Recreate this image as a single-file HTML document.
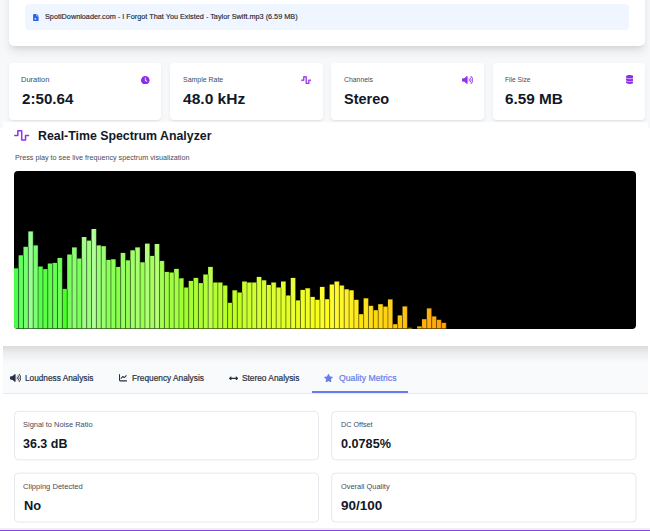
<!DOCTYPE html>
<html><head><meta charset="utf-8"><title>Audio Analyzer</title>
<style>
html,body{margin:0;padding:0}
body{width:650px;height:531px;overflow:hidden;position:relative;background:linear-gradient(to bottom,#f7f8fa 0,#f7f8fa 127.5px,#fff 128px);font-family:"Liberation Sans",sans-serif;color:#1f2937}
.abs,.t,.ic{position:absolute}
.t{white-space:nowrap;line-height:1;display:block;z-index:6;transform-origin:0 50%}
.ic{z-index:6}
.topcard{left:9px;top:-20px;width:636px;height:66.3px;background:#fff;border-radius:5px;box-shadow:0 6.5px 10px -1.5px rgba(0,0,0,.10),0 2.5px 4px -2px rgba(0,0,0,.08)}
.pill{left:25.4px;top:3.8px;width:603.4px;height:26.2px;background:#eff6ff;border-radius:4px}
.stat{top:63px;width:152.4px;height:56.7px;background:#fff;border-radius:4px;box-shadow:0 2px 4px -1px rgba(0,0,0,.10),0 1px 2px -1px rgba(0,0,0,.06)}
.panel{left:2.5px;top:121.5px;width:645.5px;height:224px;background:#fff;z-index:3}
.tabs{left:2.5px;top:345.5px;width:645.5px;height:47px;background:#f9fafb;border-bottom:1px solid #e7e9ed;z-index:2}
.tabs:before{content:"";position:absolute;left:0;top:0;right:0;height:18px;background:linear-gradient(to bottom,rgba(0,0,0,.125),rgba(0,0,0,.05) 40%,rgba(0,0,0,.015) 75%,rgba(0,0,0,0))}
.content{left:2.5px;top:393.5px;width:645.5px;height:140px;background:#fff}
.mcard{width:302.6px;height:47.6px;border:1px solid #eaecf0;border-radius:4px;background:#fff}
.bottom{left:0;top:529.5px;width:650px;height:2px;background:#8b3ff0;z-index:7}
</style></head><body>
<div class="abs topcard"></div>
<div class="abs pill"></div>
<svg class="ic" style="left:33.4px;top:13.6px" width="5.7" height="7.3" viewBox="0 0 384 512"><path fill="#2563eb" d="M64 0C28.700 0 0 28.700 0 64V448c0 35.300 28.700 64 64 64H320c35.300 0 64-28.700 64-64V160H256c-17.700 0-32-14.300-32-32V0H64zM256 0V128H384L256 0z"/><path fill="#dbeafe" d="M96 304h44l56-48v176l-56-48H96zM232 296c32 20 32 76 0 96z"/></svg>
<span class="t" id="fname" style="-webkit-text-stroke:0.15px;left:44.80px;top:13.25px;font-size:7.5px;font-weight:400;color:#1f2937;transform:scaleX(0.9705)">SpotiDownloader.com - I Forgot That You Existed - Taylor Swift.mp3 (6.59 MB)</span>

<div class="abs stat" style="left:9.0px"></div><div class="abs stat" style="left:170.2px"></div><div class="abs stat" style="left:331.4px"></div><div class="abs stat" style="left:492.6px"></div>
<span class="t" id="l1" style="left:21.30px;top:76.41px;font-size:7.9px;font-weight:400;color:#434c5a;transform:scaleX(0.9488)">Duration</span><span class="t" id="s1" style="left:22.00px;top:91.35px;font-size:15.3px;font-weight:700;color:#111827;transform:scaleX(0.9905)">2:50.64</span><svg class="ic" style="left:141.3px;top:75.7px" width="8.6" height="8.6" viewBox="0 0 512 512"><path fill="#8b2eea" d="M256 0a256 256 0 1 1 0 512A256 256 0 1 1 256 0zM232 120V256c0 8 4 15.500 10.700 20l96 64c11 7.400 25.900 4.400 33.300-6.700s4.400-25.900-6.700-33.300L280 243.200V120c0-13.300-10.700-24-24-24s-24 10.700-24 24z"/></svg>
<span class="t" id="l2" style="left:182.70px;top:76.41px;font-size:7.9px;font-weight:400;color:#434c5a;transform:scaleX(0.8811)">Sample Rate</span><span class="t" id="s2" style="left:182.70px;top:91.35px;font-size:15.3px;font-weight:700;color:#111827;transform:scaleX(1.0174)">48.0 kHz</span><svg class="ic" style="left:300.6px;top:76.1px" width="10.5" height="8.4" viewBox="-10 17 660 478" preserveAspectRatio="none"><path fill="#9333ea" stroke="#9333ea" stroke-width="18" d="M128 64c0-17.700 14.300-32 32-32H320c17.700 0 32 14.300 32 32V416h96V256c0-17.700 14.300-32 32-32H608c17.700 0 32 14.300 32 32s-14.300 32-32 32H512V448c0 17.700-14.300 32-32 32H320c-17.700 0-32-14.300-32-32V96H192V256c0 17.700-14.300 32-32 32H32c-17.700 0-32-14.300-32-32s14.300-32 32-32h96V64z"/></svg>
<span class="t" id="l3" style="left:343.50px;top:76.41px;font-size:7.9px;font-weight:400;color:#434c5a;transform:scaleX(0.8697)">Channels</span><span class="t" id="s3" style="left:344.00px;top:91.35px;font-size:15.3px;font-weight:700;color:#111827;transform:scaleX(0.9452)">Stereo</span><svg class="ic" style="left:461.7px;top:75.8px" width="11.2" height="8.0" viewBox="0 28 640 456"><g fill="#9333ea"><path d="M301.1 34.8C312.6 40 320 51.400 320 64V448c0 12.600-7.400 24-18.900 29.200s-25 3.100-34.400-5.300L131.800 352H64c-35.300 0-64-28.700-64-64V224c0-35.300 28.700-64 64-64h67.800L266.700 40.100c9.400-8.400 22.900-10.400 34.400-5.300z"/><g><path d="M412.6 181.500C434.100 199.100 448 225.900 448 256s-13.900 56.900-35.400 74.500c-10.300 8.400-25.400 6.800-33.800-3.500s-6.800-25.400 3.500-33.800C393.100 284.400 400 271 400 256s-6.900-28.400-17.700-37.300c-10.300-8.400-11.800-23.500-3.500-33.800s23.500-11.800 33.800-3.500z"/><path d="M473.1 107c43.200 35.200 70.900 88.900 70.900 149s-27.700 113.800-70.900 149c-10.300 8.400-25.400 6.800-33.800-3.500s-6.800-25.400 3.500-33.800C475.300 341.300 496 301.100 496 256s-20.700-85.300-53.200-111.800c-10.300-8.400-11.800-23.500-3.500-33.800s23.500-11.800 33.800-3.500z"/><path d="M533.6 32.500C598.500 85.200 640 165.800 640 256s-41.500 170.700-106.400 223.500c-10.300 8.400-25.400 6.800-33.800-3.500s-6.800-25.400 3.500-33.800C557.500 398.200 592 331.200 592 256s-34.500-142.200-88.700-186.300c-10.300-8.400-11.800-23.500-3.500-33.800s23.500-11.800 33.800-3.500z"/></g></g></svg>
<span class="t" id="l4" style="left:504.80px;top:76.41px;font-size:7.9px;font-weight:400;color:#434c5a;transform:scaleX(0.8392)">File Size</span><span class="t" id="s4" style="left:505.30px;top:91.35px;font-size:15.3px;font-weight:700;color:#111827;transform:scaleX(1.0015)">6.59 MB</span><svg class="ic" style="left:625.7px;top:75.3px" width="7.8" height="8.9" viewBox="0 0 448 512"><path fill="#8b2eea" d="M448 80v48c0 44.200-100.300 80-224 80S0 172.200 0 128V80C0 35.800 100.300 0 224 0S448 35.800 448 80zM393.200 214.700c20.800-7.400 39.900-16.900 54.800-28.600V288c0 44.200-100.300 80-224 80S0 332.200 0 288V186.100c14.900 11.800 34 21.200 54.800 28.600C99.700 230.700 159.500 240 224 240s124.300-9.300 169.200-25.300zM0 346.100c14.900 11.800 34 21.200 54.800 28.600C99.700 390.700 159.500 400 224 400s124.300-9.300 169.200-25.300c20.800-7.400 39.900-16.900 54.800-28.600V432c0 44.200-100.300 80-224 80S0 476.200 0 432V346.100z"/></svg>

<div class="abs panel"></div>
<svg class="ic" style="left:14.3px;top:130.0px" width="15.4" height="10.8" viewBox="0 32 640 448"><path fill="#9333ea" d="M128 64c0-17.700 14.300-32 32-32H320c17.700 0 32 14.300 32 32V416h96V256c0-17.700 14.300-32 32-32H608c17.700 0 32 14.300 32 32s-14.300 32-32 32H512V448c0 17.700-14.300 32-32 32H320c-17.700 0-32-14.300-32-32V96H192V256c0 17.700-14.300 32-32 32H32c-17.700 0-32-14.300-32-32s14.300-32 32-32h96V64z"/></svg>
<span class="t" id="title" style="left:38.20px;top:129.84px;font-size:12px;font-weight:700;color:#111827;transform:scaleX(1.0282)">Real-Time Spectrum Analyzer</span>
<span class="t" id="sub" style="left:14.50px;top:154.07px;font-size:7.6px;font-weight:400;color:#434c5a;transform:scaleX(0.9477)">Press play to see live frequency spectrum visualization</span>
<svg class="abs" style="left:14.3px;top:171px;border-radius:4px;background:#000;z-index:6" width="622" height="157.5" viewBox="0 0 622 157.5">
<rect x="-0.25" y="97.3" width="4.88" height="60.2" fill="hsl(120.0,100%,64.1%)"/>
<rect x="4.61" y="84.3" width="4.88" height="73.2" fill="hsl(119.1,100%,68.8%)"/>
<rect x="9.47" y="75.8" width="4.88" height="81.7" fill="hsl(118.1,100%,72.2%)"/>
<rect x="14.33" y="60.4" width="4.88" height="97.1" fill="hsl(117.2,100%,79.0%)"/>
<rect x="19.19" y="74.4" width="4.88" height="83.1" fill="hsl(116.2,100%,72.7%)"/>
<rect x="24.05" y="95.5" width="4.88" height="62.0" fill="hsl(115.3,100%,64.7%)"/>
<rect x="28.91" y="98.1" width="4.88" height="59.4" fill="hsl(114.4,100%,63.8%)"/>
<rect x="33.77" y="92.5" width="4.88" height="65.0" fill="hsl(113.4,100%,65.7%)"/>
<rect x="38.62" y="91.9" width="4.88" height="65.6" fill="hsl(112.5,100%,65.9%)"/>
<rect x="43.48" y="86.9" width="4.88" height="70.6" fill="hsl(111.6,100%,67.8%)"/>
<rect x="48.34" y="117.9" width="4.88" height="39.6" fill="hsl(110.6,100%,57.8%)"/>
<rect x="53.20" y="83.5" width="4.88" height="74.0" fill="hsl(109.7,100%,69.1%)"/>
<rect x="58.06" y="76.4" width="4.88" height="81.1" fill="hsl(108.8,100%,71.9%)"/>
<rect x="62.92" y="87.5" width="4.88" height="70.0" fill="hsl(107.8,100%,67.5%)"/>
<rect x="67.78" y="66.0" width="4.88" height="91.5" fill="hsl(106.9,100%,76.4%)"/>
<rect x="72.64" y="69.6" width="4.88" height="87.9" fill="hsl(105.9,100%,74.8%)"/>
<rect x="77.50" y="58.0" width="4.88" height="99.5" fill="hsl(105.0,100%,80.1%)"/>
<rect x="82.36" y="74.4" width="4.88" height="83.1" fill="hsl(104.1,100%,72.7%)"/>
<rect x="87.22" y="75.2" width="4.88" height="82.3" fill="hsl(103.1,100%,72.4%)"/>
<rect x="92.08" y="88.9" width="4.88" height="68.6" fill="hsl(102.2,100%,67.0%)"/>
<rect x="96.94" y="88.3" width="4.88" height="69.2" fill="hsl(101.2,100%,67.2%)"/>
<rect x="101.80" y="95.9" width="4.88" height="61.6" fill="hsl(100.3,100%,64.5%)"/>
<rect x="106.66" y="81.9" width="4.88" height="75.6" fill="hsl(99.4,100%,69.7%)"/>
<rect x="111.52" y="89.3" width="4.88" height="68.2" fill="hsl(98.4,100%,66.9%)"/>
<rect x="116.38" y="79.3" width="4.88" height="78.2" fill="hsl(97.5,100%,70.7%)"/>
<rect x="121.23" y="76.4" width="4.88" height="81.1" fill="hsl(96.6,100%,71.9%)"/>
<rect x="126.09" y="91.3" width="4.88" height="66.2" fill="hsl(95.6,100%,66.2%)"/>
<rect x="130.95" y="72.6" width="4.88" height="84.9" fill="hsl(94.7,100%,73.5%)"/>
<rect x="135.81" y="84.9" width="4.88" height="72.6" fill="hsl(93.8,100%,68.5%)"/>
<rect x="140.67" y="73.0" width="4.88" height="84.5" fill="hsl(92.8,100%,73.3%)"/>
<rect x="145.53" y="89.9" width="4.88" height="67.6" fill="hsl(91.9,100%,66.7%)"/>
<rect x="150.39" y="100.9" width="4.88" height="56.6" fill="hsl(90.9,100%,62.9%)"/>
<rect x="155.25" y="101.5" width="4.88" height="56.0" fill="hsl(90.0,100%,62.7%)"/>
<rect x="160.11" y="97.9" width="4.88" height="59.6" fill="hsl(89.1,100%,63.8%)"/>
<rect x="164.97" y="107.3" width="4.88" height="50.2" fill="hsl(88.1,100%,60.8%)"/>
<rect x="169.83" y="116.5" width="4.88" height="41.0" fill="hsl(87.2,100%,58.2%)"/>
<rect x="174.69" y="109.9" width="4.88" height="47.6" fill="hsl(86.2,100%,60.1%)"/>
<rect x="179.55" y="106.9" width="4.88" height="50.6" fill="hsl(85.3,100%,61.0%)"/>
<rect x="184.41" y="112.1" width="4.88" height="45.4" fill="hsl(84.4,100%,59.4%)"/>
<rect x="189.27" y="103.5" width="4.88" height="54.0" fill="hsl(83.4,100%,62.0%)"/>
<rect x="194.12" y="95.9" width="4.88" height="61.6" fill="hsl(82.5,100%,64.5%)"/>
<rect x="198.98" y="111.5" width="4.88" height="46.0" fill="hsl(81.6,100%,59.6%)"/>
<rect x="203.84" y="111.5" width="4.88" height="46.0" fill="hsl(80.6,100%,59.6%)"/>
<rect x="208.70" y="114.5" width="4.88" height="43.0" fill="hsl(79.7,100%,58.7%)"/>
<rect x="213.56" y="131.8" width="4.88" height="25.7" fill="hsl(78.8,100%,54.4%)"/>
<rect x="218.42" y="119.3" width="4.88" height="38.2" fill="hsl(77.8,100%,57.4%)"/>
<rect x="223.28" y="121.5" width="4.88" height="36.0" fill="hsl(76.9,100%,56.9%)"/>
<rect x="228.14" y="110.5" width="4.88" height="47.0" fill="hsl(75.9,100%,59.9%)"/>
<rect x="233.00" y="111.5" width="4.88" height="46.0" fill="hsl(75.0,100%,59.6%)"/>
<rect x="237.86" y="111.5" width="4.88" height="46.0" fill="hsl(74.1,100%,59.6%)"/>
<rect x="242.72" y="105.9" width="4.88" height="51.6" fill="hsl(73.1,100%,61.3%)"/>
<rect x="247.58" y="109.3" width="4.88" height="48.2" fill="hsl(72.2,100%,60.2%)"/>
<rect x="252.44" y="113.9" width="4.88" height="43.6" fill="hsl(71.2,100%,58.9%)"/>
<rect x="257.30" y="111.5" width="4.88" height="46.0" fill="hsl(70.3,100%,59.6%)"/>
<rect x="262.16" y="116.5" width="4.88" height="41.0" fill="hsl(69.4,100%,58.2%)"/>
<rect x="267.02" y="110.5" width="4.88" height="47.0" fill="hsl(68.4,100%,59.9%)"/>
<rect x="271.88" y="124.5" width="4.88" height="33.0" fill="hsl(67.5,100%,56.1%)"/>
<rect x="276.73" y="106.9" width="4.88" height="50.6" fill="hsl(66.6,100%,61.0%)"/>
<rect x="281.59" y="129.4" width="4.88" height="28.1" fill="hsl(65.6,100%,55.0%)"/>
<rect x="286.45" y="118.9" width="4.88" height="38.6" fill="hsl(64.7,100%,57.5%)"/>
<rect x="291.31" y="117.3" width="4.88" height="40.2" fill="hsl(63.8,100%,58.0%)"/>
<rect x="296.17" y="125.9" width="4.88" height="31.6" fill="hsl(62.8,100%,55.8%)"/>
<rect x="301.03" y="128.8" width="4.88" height="28.7" fill="hsl(61.9,100%,55.1%)"/>
<rect x="305.89" y="115.9" width="4.88" height="41.6" fill="hsl(60.9,100%,58.4%)"/>
<rect x="310.75" y="128.2" width="4.88" height="29.3" fill="hsl(60.0,100%,55.2%)"/>
<rect x="315.61" y="113.5" width="4.88" height="44.0" fill="hsl(59.1,100%,59.0%)"/>
<rect x="320.47" y="110.5" width="4.88" height="47.0" fill="hsl(58.1,100%,59.9%)"/>
<rect x="325.33" y="114.5" width="4.88" height="43.0" fill="hsl(57.2,100%,58.7%)"/>
<rect x="330.19" y="118.3" width="4.88" height="39.2" fill="hsl(56.2,100%,57.7%)"/>
<rect x="335.05" y="119.3" width="4.88" height="38.2" fill="hsl(55.3,100%,57.4%)"/>
<rect x="339.91" y="128.8" width="4.88" height="28.7" fill="hsl(54.4,100%,55.1%)"/>
<rect x="344.77" y="143.2" width="4.88" height="14.3" fill="hsl(53.4,100%,52.2%)"/>
<rect x="349.62" y="127.3" width="4.88" height="30.2" fill="hsl(52.5,100%,55.5%)"/>
<rect x="354.48" y="134.8" width="4.88" height="22.7" fill="hsl(51.6,100%,53.8%)"/>
<rect x="359.34" y="139.2" width="4.88" height="18.3" fill="hsl(50.6,100%,52.9%)"/>
<rect x="364.20" y="133.2" width="4.88" height="24.3" fill="hsl(49.7,100%,54.1%)"/>
<rect x="369.06" y="135.6" width="4.88" height="21.9" fill="hsl(48.8,100%,53.6%)"/>
<rect x="373.92" y="128.4" width="4.88" height="29.1" fill="hsl(47.8,100%,55.2%)"/>
<rect x="378.78" y="153.2" width="4.88" height="4.3" fill="hsl(46.9,100%,50.6%)"/>
<rect x="383.64" y="144.4" width="4.88" height="13.1" fill="hsl(45.9,100%,52.0%)"/>
<rect x="388.50" y="135.4" width="4.88" height="22.1" fill="hsl(45.0,100%,53.7%)"/>
<rect x="393.36" y="156.8" width="4.88" height="0.7" fill="hsl(44.1,100%,50.1%)"/>
<rect x="403.08" y="155.4" width="4.88" height="2.1" fill="hsl(42.2,100%,50.3%)"/>
<rect x="407.94" y="148.2" width="4.88" height="9.3" fill="hsl(41.2,100%,51.3%)"/>
<rect x="412.80" y="137.4" width="4.88" height="20.1" fill="hsl(40.3,100%,53.3%)"/>
<rect x="417.66" y="145.4" width="4.88" height="12.1" fill="hsl(39.4,100%,51.8%)"/>
<rect x="422.52" y="148.8" width="4.88" height="8.7" fill="hsl(38.4,100%,51.2%)"/>
<rect x="427.38" y="151.8" width="4.88" height="5.7" fill="hsl(37.5,100%,50.8%)"/>
<g fill="#000" fill-opacity=".38">
<rect x="4.06" y="97.3" width="1.1" height="60.2"/>
<rect x="8.92" y="84.3" width="1.1" height="73.2"/>
<rect x="13.78" y="75.8" width="1.1" height="81.7"/>
<rect x="18.64" y="60.4" width="1.1" height="97.1"/>
<rect x="23.50" y="74.4" width="1.1" height="83.1"/>
<rect x="28.36" y="95.5" width="1.1" height="62.0"/>
<rect x="33.22" y="98.1" width="1.1" height="59.4"/>
<rect x="38.08" y="92.5" width="1.1" height="65.0"/>
<rect x="42.93" y="91.9" width="1.1" height="65.6"/>
<rect x="47.79" y="86.9" width="1.1" height="70.6"/>
<rect x="52.65" y="117.9" width="1.1" height="39.6"/>
<rect x="57.51" y="83.5" width="1.1" height="74.0"/>
<rect x="62.37" y="76.4" width="1.1" height="81.1"/>
<rect x="67.23" y="87.5" width="1.1" height="70.0"/>
<rect x="72.09" y="66.0" width="1.1" height="91.5"/>
<rect x="76.95" y="69.6" width="1.1" height="87.9"/>
<rect x="81.81" y="58.0" width="1.1" height="99.5"/>
<rect x="86.67" y="74.4" width="1.1" height="83.1"/>
<rect x="91.53" y="75.2" width="1.1" height="82.3"/>
<rect x="96.39" y="88.9" width="1.1" height="68.6"/>
<rect x="101.25" y="88.3" width="1.1" height="69.2"/>
<rect x="106.11" y="95.9" width="1.1" height="61.6"/>
<rect x="110.97" y="81.9" width="1.1" height="75.6"/>
<rect x="115.83" y="89.3" width="1.1" height="68.2"/>
<rect x="120.68" y="79.3" width="1.1" height="78.2"/>
<rect x="125.54" y="76.4" width="1.1" height="81.1"/>
<rect x="130.40" y="91.3" width="1.1" height="66.2"/>
<rect x="135.26" y="72.6" width="1.1" height="84.9"/>
<rect x="140.12" y="84.9" width="1.1" height="72.6"/>
<rect x="144.98" y="73.0" width="1.1" height="84.5"/>
<rect x="149.84" y="89.9" width="1.1" height="67.6"/>
<rect x="154.70" y="100.9" width="1.1" height="56.6"/>
<rect x="159.56" y="101.5" width="1.1" height="56.0"/>
<rect x="164.42" y="97.9" width="1.1" height="59.6"/>
<rect x="169.28" y="107.3" width="1.1" height="50.2"/>
<rect x="174.14" y="116.5" width="1.1" height="41.0"/>
<rect x="179.00" y="109.9" width="1.1" height="47.6"/>
<rect x="183.86" y="106.9" width="1.1" height="50.6"/>
<rect x="188.72" y="112.1" width="1.1" height="45.4"/>
<rect x="193.57" y="103.5" width="1.1" height="54.0"/>
<rect x="198.43" y="95.9" width="1.1" height="61.6"/>
<rect x="203.29" y="111.5" width="1.1" height="46.0"/>
<rect x="208.15" y="111.5" width="1.1" height="46.0"/>
<rect x="213.01" y="114.5" width="1.1" height="43.0"/>
<rect x="217.87" y="131.8" width="1.1" height="25.7"/>
<rect x="222.73" y="119.3" width="1.1" height="38.2"/>
<rect x="227.59" y="121.5" width="1.1" height="36.0"/>
<rect x="232.45" y="110.5" width="1.1" height="47.0"/>
<rect x="237.31" y="111.5" width="1.1" height="46.0"/>
<rect x="242.17" y="111.5" width="1.1" height="46.0"/>
<rect x="247.03" y="105.9" width="1.1" height="51.6"/>
<rect x="251.89" y="109.3" width="1.1" height="48.2"/>
<rect x="256.75" y="113.9" width="1.1" height="43.6"/>
<rect x="261.61" y="111.5" width="1.1" height="46.0"/>
<rect x="266.47" y="116.5" width="1.1" height="41.0"/>
<rect x="271.32" y="110.5" width="1.1" height="47.0"/>
<rect x="276.18" y="124.5" width="1.1" height="33.0"/>
<rect x="281.04" y="106.9" width="1.1" height="50.6"/>
<rect x="285.90" y="129.4" width="1.1" height="28.1"/>
<rect x="290.76" y="118.9" width="1.1" height="38.6"/>
<rect x="295.62" y="117.3" width="1.1" height="40.2"/>
<rect x="300.48" y="125.9" width="1.1" height="31.6"/>
<rect x="305.34" y="128.8" width="1.1" height="28.7"/>
<rect x="310.20" y="115.9" width="1.1" height="41.6"/>
<rect x="315.06" y="128.2" width="1.1" height="29.3"/>
<rect x="319.92" y="113.5" width="1.1" height="44.0"/>
<rect x="324.78" y="110.5" width="1.1" height="47.0"/>
<rect x="329.64" y="114.5" width="1.1" height="43.0"/>
<rect x="334.50" y="118.3" width="1.1" height="39.2"/>
<rect x="339.36" y="119.3" width="1.1" height="38.2"/>
<rect x="344.22" y="128.8" width="1.1" height="28.7"/>
<rect x="349.07" y="143.2" width="1.1" height="14.3"/>
<rect x="353.93" y="127.3" width="1.1" height="30.2"/>
<rect x="358.79" y="134.8" width="1.1" height="22.7"/>
<rect x="363.65" y="139.2" width="1.1" height="18.3"/>
<rect x="368.51" y="133.2" width="1.1" height="24.3"/>
<rect x="373.37" y="135.6" width="1.1" height="21.9"/>
<rect x="378.23" y="128.4" width="1.1" height="29.1"/>
<rect x="383.09" y="153.2" width="1.1" height="4.3"/>
<rect x="387.95" y="144.4" width="1.1" height="13.1"/>
<rect x="392.81" y="135.4" width="1.1" height="22.1"/>
<rect x="397.67" y="156.8" width="1.1" height="0.7"/>
<rect x="407.39" y="155.4" width="1.1" height="2.1"/>
<rect x="412.25" y="148.2" width="1.1" height="9.3"/>
<rect x="417.11" y="137.4" width="1.1" height="20.1"/>
<rect x="421.97" y="145.4" width="1.1" height="12.1"/>
<rect x="426.82" y="148.8" width="1.1" height="8.7"/>
<rect x="431.68" y="151.8" width="1.1" height="5.7"/>
</g>
</svg>

<div class="abs tabs"></div>
<svg class="ic" style="left:9.7px;top:374.3px" width="11.2" height="8.0" viewBox="0 28 640 456"><g fill="#273142"><path d="M301.1 34.8C312.6 40 320 51.400 320 64V448c0 12.600-7.400 24-18.900 29.200s-25 3.100-34.400-5.300L131.800 352H64c-35.300 0-64-28.700-64-64V224c0-35.300 28.700-64 64-64h67.800L266.700 40.100c9.400-8.400 22.900-10.400 34.400-5.300z"/><g><path d="M412.6 181.500C434.100 199.100 448 225.900 448 256s-13.900 56.900-35.400 74.500c-10.300 8.400-25.400 6.800-33.800-3.500s-6.800-25.400 3.500-33.800C393.100 284.400 400 271 400 256s-6.900-28.400-17.700-37.300c-10.300-8.400-11.800-23.500-3.500-33.800s23.500-11.800 33.800-3.500z"/><path d="M473.1 107c43.200 35.200 70.900 88.900 70.900 149s-27.700 113.800-70.900 149c-10.300 8.400-25.400 6.800-33.800-3.500s-6.800-25.400 3.500-33.800C475.300 341.300 496 301.100 496 256s-20.700-85.300-53.200-111.800c-10.300-8.400-11.800-23.500-3.500-33.800s23.500-11.800 33.800-3.500z"/><path d="M533.6 32.500C598.500 85.200 640 165.800 640 256s-41.500 170.700-106.400 223.500c-10.300 8.400-25.400 6.800-33.800-3.500s-6.800-25.400 3.500-33.800C557.500 398.200 592 331.200 592 256s-34.500-142.200-88.700-186.300c-10.300-8.400-11.800-23.500-3.500-33.800s23.500-11.800 33.800-3.500z"/></g></g></svg>
<span class="t" id="tab1" style="-webkit-text-stroke:0.22px;left:25.10px;top:374.11px;font-size:9.2px;font-weight:400;color:#273142;transform:scaleX(0.8987)">Loudness Analysis</span>
<svg class="ic" style="left:118.5px;top:374.2px" width="8.3" height="7.5" viewBox="0 32 512 448"><path fill="#273142" d="M64 64c0-17.700-14.300-32-32-32S0 46.300 0 64V400c0 44.200 35.800 80 80 80H480c17.700 0 32-14.300 32-32s-14.300-32-32-32H80c-8.800 0-16-7.200-16-16V64zm406.600 86.600c12.500-12.500 12.500-32.800 0-45.300s-32.800-12.500-45.300 0L320 210.700l-57.400-57.400c-12.500-12.500-32.800-12.500-45.300 0l-112 112c-12.500 12.500-12.500 32.800 0 45.300s32.800 12.500 45.300 0L240 221.300l57.400 57.400c12.500 12.500 32.800 12.500 45.300 0l128-128z"/></svg>
<span class="t" id="tab2" style="-webkit-text-stroke:0.22px;left:131.70px;top:374.11px;font-size:9.2px;font-weight:400;color:#273142;transform:scaleX(0.9025)">Frequency Analysis</span>
<svg class="ic" style="left:228.8px;top:375.6px" width="9.2" height="4.8" viewBox="0 120 512 272"><path fill="#273142" d="M377.900 169.900V216H134.100v-46.100c0-21.400-25.900-32.100-41-17L7 239c-9.400 9.400-9.400 24.600 0 33.900l86.100 86.100c15.100 15.100 41 4.400 41-17V296h243.900v46.100c0 21.400 25.900 32.100 41 17l86.100-86.100c9.400-9.400 9.400-24.600 0-33.900l-86.100-86.100c-15.100-15.100-41-4.400-41 17z"/></svg>
<span class="t" id="tab3" style="-webkit-text-stroke:0.22px;left:241.70px;top:374.11px;font-size:9.2px;font-weight:400;color:#273142;transform:scaleX(0.9048)">Stereo Analysis</span>
<svg class="ic" style="left:324.4px;top:373.6px" width="9.0" height="8.2" viewBox="20 0 536 512"><path fill="#667eea" d="M316.900 18C311.600 7 300.400 0 288.100 0s-23.400 7-28.800 18L195 150.300 51.400 171.500c-12 1.800-22 10.200-25.700 21.700s-.7 24.200 7.900 32.700L137.800 329 113.200 474.700c-2 12 3 24.200 12.900 31.300s23 8 33.800 2.300l128.300-68.500 128.300 68.500c10.800 5.700 23.900 4.900 33.800-2.300s14.900-19.300 12.900-31.300L438.500 329 542.700 225.900c8.600-8.500 11.700-21.200 7.900-32.700s-13.700-19.900-25.700-21.700L381.200 150.300 316.900 18z"/></svg>
<span class="t" id="tab4" style="-webkit-text-stroke:0.22px;left:338.50px;top:374.11px;font-size:9.2px;font-weight:400;color:#667eea;transform:scaleX(0.9463)">Quality Metrics</span>
<div class="abs" style="left:311.700px;top:390.900px;width:96.600px;height:1.800px;background:#667eea;z-index:6"></div>

<div class="abs content"></div>
<svg class="abs" style="left:0;top:400px" width="650" height="131" viewBox="0 400 650 131"><g fill="#fff" stroke="#e6e8ed" stroke-width="1">
<rect x="14.5" y="411.4" width="304" height="48.4" rx="4"/>
<rect x="331.7" y="411.4" width="304.3" height="48.4" rx="4"/>
<rect x="14.5" y="473.1" width="304" height="48.9" rx="4"/>
<rect x="331.7" y="473.1" width="304.3" height="48.9" rx="4"/>
</g></svg>
<span class="t" id="m1" style="left:23.40px;top:420.74px;font-size:8.1px;font-weight:400;color:#434c5a;transform:scaleX(0.9207)">Signal to Noise Ratio</span><span class="t" id="v1" style="left:23.40px;top:437.10px;font-size:13px;font-weight:700;color:#111827;transform:scaleX(0.9600)">36.3 dB</span><span class="t" id="m2" style="left:341.00px;top:420.74px;font-size:8.1px;font-weight:400;color:#434c5a;transform:scaleX(0.8929)">DC Offset</span><span class="t" id="v2" style="left:341.00px;top:437.10px;font-size:13px;font-weight:700;color:#111827;transform:scaleX(0.9722)">0.0785%</span><span class="t" id="m3" style="left:23.40px;top:483.14px;font-size:8.1px;font-weight:400;color:#434c5a;transform:scaleX(0.9344)">Clipping Detected</span><span class="t" id="v3" style="left:23.60px;top:499.30px;font-size:13px;font-weight:700;color:#111827;transform:scaleX(0.9859)">No</span><span class="t" id="m4" style="left:341.00px;top:483.14px;font-size:8.1px;font-weight:400;color:#434c5a;transform:scaleX(0.9156)">Overall Quality</span><span class="t" id="v4" style="left:341.00px;top:499.30px;font-size:13px;font-weight:700;color:#111827;transform:scaleX(1.0361)">90/100</span>
<div class="abs" style="left:0;top:528.2px;width:650px;height:1.4px;background:#eef1ee;z-index:7"></div>
<div class="abs bottom"></div>
</body></html>
